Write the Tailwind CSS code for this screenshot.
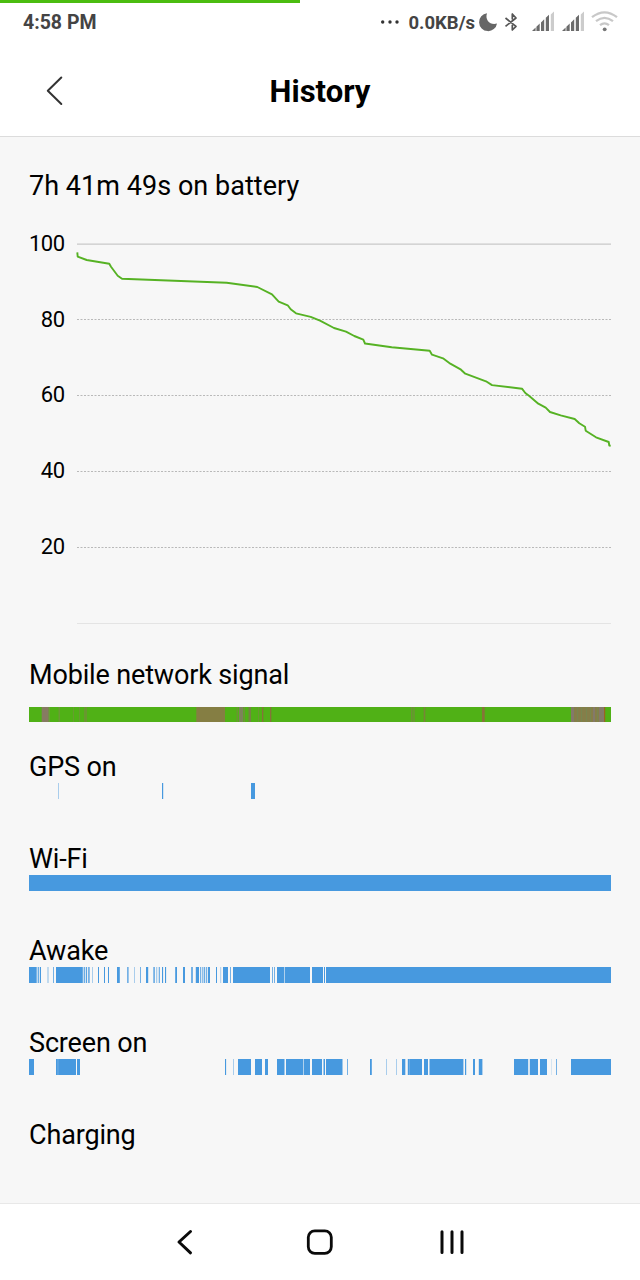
<!DOCTYPE html>
<html lang="en">
<head>
  <meta charset="UTF-8" />
  <meta name="viewport" content="width=device-width, initial-scale=1.0" />
  <title>History</title>
  <script src="https://cdn.jsdelivr.net/npm/@tailwindcss/browser@4"></script>
</head>
<body class="bg-[#f7f7f7] font-['Roboto',sans-serif] text-black">
<div class="w-[640px] h-[1280px] flex flex-col overflow-hidden">

  <!-- Status bar -->
  <div class="bg-white h-[46px] shrink-0">
    <div class="h-[3px] w-[300px] bg-[#4bbd10]"></div>
    <div class="h-10 flex items-center justify-between pl-[23px] pr-[21px] text-[#444]">
      <span class="text-[19.5px] leading-10 font-bold">4:58 PM</span>
      <svg width="240" height="40" viewBox="379 3 240 40">
        <g fill="#333">
          <circle cx="382.7" cy="22" r="1.7" /><circle cx="390" cy="22" r="1.7" /><circle cx="397" cy="22" r="1.7" />
        </g>
        <text x="408.5" y="28.6" font-size="18.5" font-weight="700" fill="#444" textLength="66.5">0.0KB/s</text>
        <path d="M487 13.2A9 9 0 1 0 497 23.4C491 25.5 484.5 20.5 487 13.2Z" fill="#666" />
        <path d="M505.5 18L516 26.3L512.3 30V24.8M505.5 26.3L516 18L512.3 14V19.5" fill="none" stroke="#555" stroke-width="1.7" stroke-linejoin="round" />
        <g id="signal">
          <path d="M532 31L535.6 27.6V31ZM536.4 26.8L539.7 23.6V31H536.4ZM541 22.4L544.2 19.3V31H541ZM545.8 17.8L549 14.8V31H545.8Z" fill="#6b6b6b" />
          <path d="M550.8 14.5L554 11.5V31H550.8Z" fill="#ccc" />
        </g>
        <use href="#signal" x="30" />
        <g fill="none" stroke="#c8c8c8" stroke-width="2.3">
          <path d="M592 17.2Q604.5 7.5 617 17.2" />
          <path d="M596 21.2Q604.5 14.5 613 21.2" />
          <path d="M600 25.2Q604.5 21.5 609 25.2" />
        </g>
        <circle cx="604.7" cy="29.3" r="1.9" fill="#777" />
      </svg>
    </div>
  </div>

  <!-- Header -->
  <header class="bg-white h-[91px] shrink-0 border-b border-[#dcdcdc] grid grid-cols-3 items-center">
    <svg class="ml-[46px]" width="18" height="32" viewBox="46 75 18 32" fill="none" stroke="#333" stroke-width="2" stroke-linecap="round" stroke-linejoin="round">
      <path d="M61.3 77.5L47.8 90.8L61.3 104" />
    </svg>
    <h1 class="pt-[2px] text-[31px] font-bold text-center">History</h1>
  </header>

  <!-- Content -->
  <main class="h-[1066px] shrink-0 pt-[29px]">
    <h2 class="pl-[29px] h-10 leading-10 text-[27px] tracking-[0.04px]">7h 41m 49s on battery</h2>

    <svg class="block mt-[19px]" width="640" height="410" viewBox="0 225 640 410">
      <g font-size="22" text-anchor="end" letter-spacing="-0.5">
        <text x="64.5" y="250.5">100</text>
        <text x="64.5" y="326.5">80</text>
        <text x="64.5" y="402">60</text>
        <text x="64.5" y="478">40</text>
        <text x="64.5" y="554">20</text>
      </g>
      <path d="M77 244.2H611" stroke="#c9c9c9" stroke-width="1.2" />
      <path d="M77 319.5H611M77 395.5H611M77 471.5H611M77 547.5H611" stroke="#b9b9b9" stroke-dasharray="2 1.5" />
      <path d="M77 623.5H611" stroke="#e4e4e4" />
      <polyline fill="none" stroke="#56b224" stroke-width="1.9" stroke-linejoin="round" points="77.3,252.3 77.7,256.7 86.7,260 109.3,263.7 111,266.7 117.7,275.7 122,278.7 226.7,282.7 257.3,287 272,294.3 278.7,301.7 287.7,305.3 290.7,309.3 296,313.3 310.7,316.8 320,320.7 334,328 346,331.7 354.3,336 363.3,339.7 365,343.5 391.7,347.3 429.7,350.7 432,354.7 443,358.3 450.3,363.7 461,369.7 465.3,373.7 486,381.3 492,385.1 522,388.7 525.3,393 529.3,396 538.3,403.7 545.7,407.7 550,412 560.7,415.3 574.7,419 579.3,423.3 585,426.7 585.7,430.7 596,437.3 608.7,442 609.3,445.5 610.7,445.7" />
    </svg>

    <div class="mt-5 px-[29px] text-[27px] leading-10 tracking-[-0.15px]">
      <section class="h-[92px]">
        <h3>Mobile network signal</h3>
        <svg class="block mt-3" id="mobile" width="582" height="15"></svg>
      </section>
      <section class="h-[92px]">
        <h3 class="h-9">GPS on</h3>
        <svg class="block" id="gps" width="582" height="16"></svg>
      </section>
      <section class="h-[92px]">
        <h3 class="h-9">Wi-Fi</h3>
        <svg class="block" id="wifi" width="582" height="16"></svg>
      </section>
      <section class="h-[92px]">
        <h3 class="h-9">Awake</h3>
        <svg class="block" id="awake" width="582" height="16"></svg>
      </section>
      <section class="h-[92px]">
        <h3 class="h-9">Screen on</h3>
        <svg class="block" id="screen" width="582" height="16"></svg>
      </section>
      <section>
        <h3>Charging</h3>
      </section>
    </div>
  </main>

  <!-- Navigation bar -->
  <nav class="bg-white grow border-t border-[#e8e8e8]">
    <svg width="640" height="76" viewBox="0 1204 640 76" fill="none" stroke="#0a0a0a" stroke-width="3" stroke-linecap="round" stroke-linejoin="round">
      <path d="M190.5 1231.5L179 1242L190.5 1252.8" />
      <rect x="308.3" y="1230.8" width="23" height="22.5" rx="6.5" stroke-width="2.8" />
      <path d="M442 1231.8V1252.6M452 1231.8V1252.6M462 1231.8V1252.6" />
    </svg>
  </nav>
</div>

<script>
  const BLUE = '#4799df';
  const LIGHT = '#a9cdec';
  const MID = '#75b1e5';

  // Each span: [start, end, color]
  const tracks = {
    mobile: [
      [0, 582, '#50b116'], [12.7, 19.7, '#877b62'], [20, 21, '#68a333'], [29.5, 31, '#6b9a35'],
      [44, 45, '#669d2f'], [50, 51, '#669d2f'], [55, 58, '#68982f'],
      [167.3, 196, '#857e43'], [207.5, 209, '#68982f'], [210, 214.3, '#7d825a'], [215, 216, '#6f9038'],
      [219.5, 222, '#768243'], [229, 230, '#689a2f'], [233, 234.3, '#86723a'], [241, 242.3, '#86723a'],
      [382, 383.5, '#6d9038'], [384.3, 385.7, '#6d9038'], [394.7, 396.3, '#798438'], [453, 455.7, '#877439'],
      [542, 576, '#857e49'], [542, 545, '#84796a'], [548, 549, '#788650'], [552, 553, '#788650'],
      [557, 558, '#788650'], [561, 562, '#788650'], [564, 566, '#84796a'], [568, 569, '#788650'],
      [570, 575, '#84796a'], [575, 576.2, '#9a6420'],
    ],
    gps: [[29, 30, LIGHT], [133, 134.2], [222, 226]],
    wifi: [[0, 582]],
    awake: [
      [0, 7.7], [8.7, 9.8], [10.8, 12], [18.3, 19.7, LIGHT], [24, 25, MID], [27, 53.8],
      [54.7, 55.8], [56.8, 57.9], [58.9, 60.8, MID], [63, 64, LIGHT], [69, 70], [75, 76], [79, 80],
      [88, 90.8], [98, 99.7, MID], [105, 106, LIGHT], [111, 112, MID], [117, 119.2],
      [124.2, 126, MID], [127, 128.3, LIGHT], [129.7, 131, MID], [133, 134.1], [136, 137.1],
      [146.2, 148], [154, 156], [162, 164, MID], [166.8, 170], [171, 172, MID], [172.8, 173.8, MID],
      [174.7, 175.8], [176.8, 178.2, MID], [179, 181], [187, 188], [191.2, 192.2, LIGHT],
      [194, 199], [201, 202, MID], [204, 241], [243, 244, MID], [245, 246, MID], [248, 255.3],
      [255.3, 256, LIGHT], [256, 281], [283, 294], [295, 296], [297, 582],
    ],
    screen: [
      [0, 5], [27, 47], [28.5, 29.4, MID], [48, 51], [196, 197.1], [204, 205, LIGHT], [209, 222],
      [226, 233], [236, 239], [248, 255.5], [257, 274.3], [274.3, 275, LIGHT], [275, 281], [283, 293],
      [294.5, 296], [297, 313.5], [318, 319, MID], [341, 342.8], [357, 358, LIGHT], [367, 368, LIGHT],
      [373, 376.3], [378.8, 393], [380, 380.7, MID], [395, 399], [400.5, 434.4], [436, 437.2],
      [444, 446], [449.8, 453.4], [485, 499.2], [500.8, 509], [511, 518],
      [522, 523, '#d5e5f2'], [527, 528, MID], [542, 582],
    ],
  };

  for (const [id, spans] of Object.entries(tracks)) {
    const svg = document.getElementById(id);
    spans.forEach(([start, end, color]) => {
      const rect = document.createElementNS('http://www.w3.org/2000/svg', 'rect');
      rect.setAttribute('x', start);
      rect.setAttribute('width', end - start);
      rect.setAttribute('height', 16);
      rect.setAttribute('fill', color || BLUE);
      svg.appendChild(rect);
    });
  }
</script>
</body>
</html>
